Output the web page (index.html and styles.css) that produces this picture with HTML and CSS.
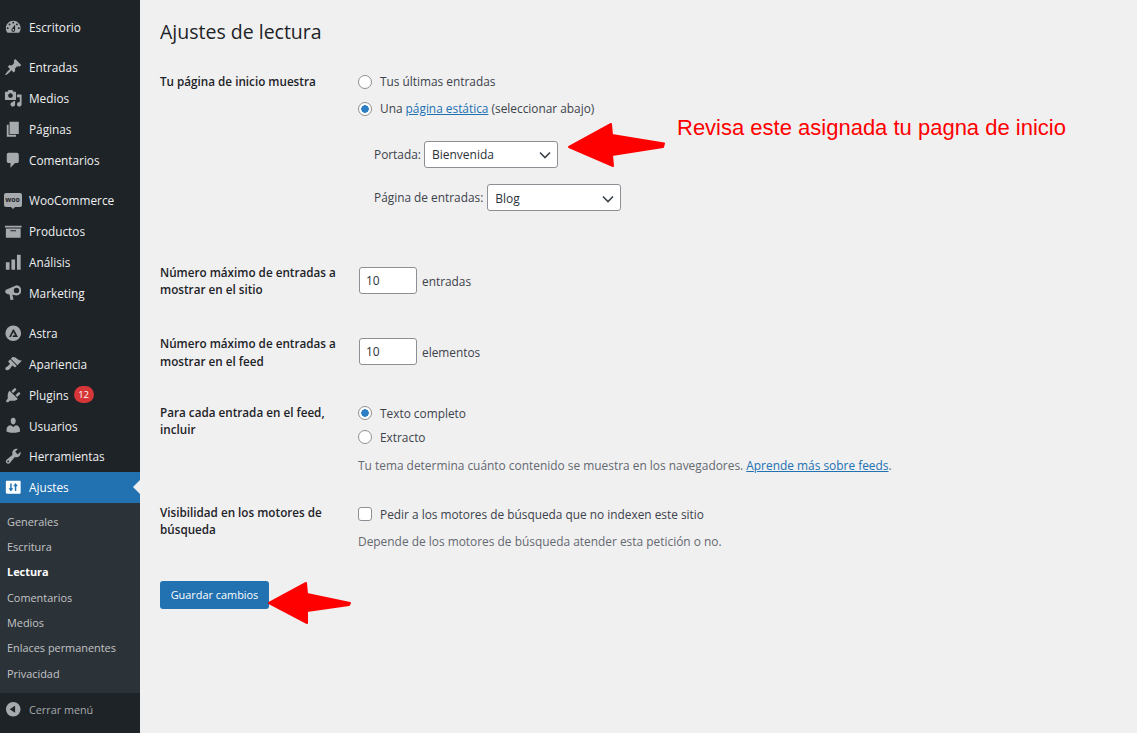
FILE: index.html
```html
<!DOCTYPE html>
<html lang="es">
<head>
<meta charset="utf-8">
<title>Ajustes de lectura</title>
<link rel="stylesheet" href="styles.css">
</head>
<body>
<div class="app">
  <nav class="side">
    <ul class="menu first">
      <li><svg class="ico" viewBox="0 0 20 20"><path d="M3.76 16h12.48c1.1-1.37 1.76-3.11 1.76-5 0-4.42-3.58-8-8-8s-8 3.58-8 8c0 1.89.66 3.63 1.76 5zM10 4c.55 0 1 .45 1 1s-.45 1-1 1-1-.45-1-1 .45-1 1-1zM6 6c.55 0 1 .45 1 1s-.45 1-1 1-1-.45-1-1 .45-1 1-1zm8 0c.55 0 1 .45 1 1s-.45 1-1 1-1-.45-1-1 .45-1 1-1zm-5.37 5.55L12 7v6c0 1.1-.9 2-2 2s-2-.9-2-2c0-.57.24-1.08.63-1.45zM4 10c.55 0 1 .45 1 1s-.45 1-1 1-1-.45-1-1 .45-1 1-1zm12 0c.55 0 1 .45 1 1s-.45 1-1 1-1-.45-1-1 .45-1 1-1zm-5 3c0-.55-.45-1-1-1s-1 .45-1 1 .45 1 1 1 1-.45 1-1z"/></svg>Escritorio</li>
    </ul>
    <ul class="menu">
      <li><svg class="ico" viewBox="0 0 20 20"><path d="M10.44 3.02l1.82-1.82 6.36 6.35-1.83 1.82c-1.05-.68-2.48-.57-3.41.36l-.75.75c-.92.93-1.04 2.35-.35 3.41l-1.83 1.82-2.41-2.41-2.8 2.79c-.42.42-3.38 2.71-3.8 2.29s1.86-3.39 2.28-3.81l2.79-2.79L4.1 9.36l1.83-1.82c1.05.69 2.48.57 3.4-.36l.75-.75c.93-.92 1.05-2.35.36-3.41z"/></svg>Entradas</li>
      <li><svg class="ico" viewBox="0 0 20 20"><path d="M13 11V4c0-.55-.45-1-1-1h-1.67L9 1H5L3.67 3H2c-.55 0-1 .45-1 1v7c0 .55.45 1 1 1h10c.55 0 1-.45 1-1zM7 4.5c1.38 0 2.5 1.12 2.5 2.5S8.38 9.5 7 9.5 4.5 8.38 4.5 7 5.62 4.5 7 4.5zM14 6h5v10.5c0 1.38-1.12 2.5-2.5 2.5S14 17.88 14 16.5s1.12-2.5 2.5-2.5c.17 0 .34.02.5.05V9h-3V6zm-4 8.05V13h2v3.5c0 1.38-1.12 2.5-2.5 2.5S7 17.88 7 16.5 8.12 14 9.5 14c.17 0 .34.02.5.05z"/></svg>Medios</li>
      <li><svg class="ico" viewBox="0 0 20 20"><path d="M6 15V2h10v13H6zm-1 1h8v2H3V5h2v11z"/></svg>Páginas</li>
      <li><svg class="ico" viewBox="0 0 20 20"><path d="M5 2h9c1.1 0 2 .9 2 2v7c0 1.1-.9 2-2 2h-2l-5 5v-5H5c-1.1 0-2-.9-2-2V4c0-1.1.9-2 2-2z"/></svg>Comentarios</li>
    </ul>
    <ul class="menu">
      <li><span class="woo">woo</span>WooCommerce</li>
      <li><svg class="ico" viewBox="0 0 20 20"><path d="M19 4v2H1V4h18zM2 7h16v10H2V7zm11 3V9H7v1h6z"/></svg>Productos</li>
      <li><svg class="ico" viewBox="0 0 20 20"><path d="M18 18V2h-4v16h4zm-6 0V7H8v11h4zm-6 0v-8H2v8h4z"/></svg>Análisis</li>
      <li><svg class="ico" viewBox="0 0 20 20"><path fill-rule="evenodd" d="M13.500 2.500a5.500 5.500 0 0 1 5 5.500 5.500 5.500 0 0 1-5 5.500L9 12.600l1.200 4.600c.1.500-.1.8-.6.9l-1.800.4c-.5.100-.8-.1-.9-.6L6 12.300l-2.500-.5C2.200 11.500 1.300 10.500 1.300 9.300s.9-2.200 2.200-2.500L13.500 2.500zm0 2.600a2.900 2.900 0 1 0 0 5.800 2.900 2.900 0 0 0 0-5.800z"/></svg>Marketing</li>
    </ul>
    <ul class="menu">
      <li><svg class="ico" viewBox="0 0 20 20"><path fill-rule="evenodd" d="M10 1.500a8.500 8.500 0 1 1 0 17 8.500 8.500 0 0 1 0-17zM9.600 6L5.500 14h2l2.600-5.200L12 12.200h-2l-.9 1.800h6L10.800 6z"/></svg>Astra</li>
      <li><svg class="ico" viewBox="0 0 20 20"><path d="M14.48 11.06L7.41 3.99l1.5-1.5c.5-.56 2.3-.47 3.51.32 1.21.8 1.43 1.28 2.91 2.1 1.18.64 2.45 1.26 4.45.85zm-.71.71L6.7 4.7 4.93 6.47c-.39.39-.39 1.02 0 1.41l1.06 1.06c.39.39.39 1.03 0 1.42-.6.6-1.43 1.11-2.21 1.69-.35.26-.7.53-1.01.84C1.43 13.23 1 14.99 1.99 16s2.75.58 4.09-.76c.31-.31.58-.66.84-1.01.58-.78 1.09-1.61 1.69-2.21.39-.39 1.02-.39 1.41 0l1.06 1.06c.39.39 1.02.39 1.41 0z"/></svg>Apariencia</li>
      <li><svg class="ico" viewBox="0 0 20 20"><path d="M13.11 4.36L9.87 7.6 8 5.73l3.24-3.24c.35-.34 1.05-.2 1.56.32.52.51.66 1.21.31 1.55zm-8 1.77l.91-1.12 9.01 9.01-1.19.84c-.71.71-2.63 1.16-3.82 1.16H6.14L4.9 17.26c-.59.59-1.54.59-2.12 0-.59-.58-.59-1.53 0-2.12l1.24-1.24v-3.88c0-1.13.4-3.19 1.09-3.89zm7.26 3.97l3.24-3.24c.34-.35 1.04-.21 1.55.31.52.51.66 1.21.32 1.55l-3.25 3.25z"/></svg>Plugins<span class="badge">12</span></li>
      <li><svg class="ico" viewBox="0 0 20 20"><path d="M10 9.25c-2.27 0-2.73-3.44-2.73-3.44C7 4.02 7.82 2 9.97 2c2.16 0 2.98 2.02 2.71 3.81 0 0-.41 3.44-2.68 3.44zm0 2.57L12.72 10c2.39 0 4.52 2.33 4.52 4.53v2.49s-3.65 1.13-7.24 1.13c-3.65 0-7.24-1.13-7.24-1.13v-2.49c0-2.25 1.94-4.48 4.47-4.48z"/></svg>Usuarios</li>
      <li><svg class="ico" viewBox="0 0 20 20"><path d="M16.68 9.77c-1.34 1.34-3.3 1.67-4.95.99l-5.41 6.52c-.99.99-2.59.99-3.58 0s-.99-2.59 0-3.57l6.52-5.42c-.68-1.65-.35-3.61.99-4.95 1.28-1.28 3.12-1.62 4.72-1.06l-2.89 2.89 2.82 2.82 2.86-2.87c.53 1.58.18 3.39-1.08 4.65zM3.81 16.21c.4.39 1.04.39 1.43 0 .4-.4.4-1.04 0-1.43-.39-.4-1.03-.4-1.43 0-.39.39-.39 1.03 0 1.43z"/></svg>Herramientas</li>
      <li class="current"><svg class="ico" viewBox="0 0 20 20"><path fill-rule="evenodd" d="M18 16V4c0-.55-.45-1-1-1H3c-.55 0-1 .45-1 1v12c0 .55.45 1 1 1h14c.55 0 1-.45 1-1zM6.700 6h1.600v5H10l-2.500 3.500L5 11h1.700V6zm5.800-.5L15 9h-1.700v5h-1.600V9H10l2.500-3.500z"/></svg>Ajustes</li>
    </ul>
    <ul class="sub">
      <li>Generales</li>
      <li>Escritura</li>
      <li class="on">Lectura</li>
      <li>Comentarios</li>
      <li>Medios</li>
      <li>Enlaces permanentes</li>
      <li>Privacidad</li>
    </ul>
    <div class="collapse"><svg class="ico" viewBox="0 0 20 20"><path d="M10 2.16c4.33 0 7.84 3.51 7.84 7.84s-3.51 7.84-7.84 7.84S2.16 14.33 2.16 10 5.71 2.16 10 2.16zm2 11.72V6.12L6.18 9.97z"/></svg>Cerrar menú</div>
  </nav>
  <main class="main">
    <h1 class="title">Ajustes de lectura</h1>
    <form class="form">
      <div class="row">
        <div class="label">Tu página de inicio muestra</div>
        <div class="field field-top">
          <div class="opt"><span class="radio"></span>Tus últimas entradas</div>
          <div class="opt gap9"><span class="radio checked"></span><span>Una <a class="link">página estática</a> (seleccionar abajo)</span></div>
          <div class="pick pick-a"><span>Portada:</span><div class="select">Bienvenida<svg class="chev" viewBox="0 0 12 8"><path d="M1 1.500l5 5 5-5"/></svg></div></div>
          <div class="pick pick-b"><span>Página de entradas:</span><div class="select">Blog<svg class="chev" viewBox="0 0 12 8"><path d="M1 1.500l5 5 5-5"/></svg></div></div>
        </div>
      </div>
      <div class="row row-num1">
        <div class="label">Número máximo de entradas a mostrar en el sitio</div>
        <div class="field num"><div class="input">10</div><span>entradas</span></div>
      </div>
      <div class="row row-num2">
        <div class="label">Número máximo de entradas a mostrar en el feed</div>
        <div class="field num"><div class="input">10</div><span>elementos</span></div>
      </div>
      <div class="row row-feed">
        <div class="label">Para cada entrada en el feed, incluir</div>
        <div class="field">
          <div class="opt"><span class="radio checked"></span>Texto completo</div>
          <div class="opt gap6"><span class="radio"></span>Extracto</div>
          <p class="note">Tu tema determina cuánto contenido se muestra en los navegadores. <a class="link">Aprende más sobre feeds</a>.</p>
        </div>
      </div>
      <div class="row row-vis">
        <div class="label">Visibilidad en los motores de búsqueda</div>
        <div class="field">
          <div class="opt shift"><span class="check"></span>Pedir a los motores de búsqueda que no indexen este sitio</div>
          <p class="note note-vis">Depende de los motores de búsqueda atender esta petición o no.</p>
        </div>
      </div>
      <div class="button">Guardar cambios</div>
    </form>
  </main>
</div>
<div class="callout">Revisa este asignada tu pagna de inicio</div>
<svg class="arrow arrow-a" viewBox="0 0 100 48"><path d="M2 26L44 3l1 11 52 8.500-1 3.500-51 8 1 11z"/></svg>
<svg class="arrow arrow-b" viewBox="0 0 86 44"><path d="M2 22L39 2l1 11 43 9-1 2-42 6 0 12z"/></svg>
</body>
</html>
```
FILE: styles.css
```css
* { box-sizing: border-box; }
html, body { margin: 0; padding: 0; height: 100%; }
body { background: #f0f0f1; color: #3c434a; font-family: "Open Sans", "Noto Sans", sans-serif; font-size: 11.870px; line-height: 18px; overflow: hidden; }
ul { list-style: none; margin: 0; padding: 0; }
.app { display: flex; height: 733px; }
.side { width: 140px; flex: none; background: #1d2327; color: #f0f0f1; display: flex; flex-direction: column; padding-top: 11.600px; }
.menu { margin-bottom: 9.700px; }
.menu li { height: 30.800px; display: flex; align-items: center; font-size: 11.800px; padding-left: 3.500px; white-space: nowrap; }
.ico { width: 18.500px; height: 18.500px; flex: none; margin-right: 7px; fill: #a7aaad; }
.woo { position: relative; width: 18px; height: 14px; flex: none; margin-right: 7.500px; border-radius: 2px; background: #a7aaad; color: #1d2327; font-size: 7px; line-height: 14px; font-weight: 700; text-align: center; }
.woo::after { content: ""; position: absolute; left: 7px; top: 14px; border: 2px solid transparent; border-top-color: #a7aaad; border-bottom-width: 0; }
.badge { margin-left: 5px; min-width: 20px; height: 17px; border-radius: 9px; background: #d63638; color: #fff; font-size: 9.500px; line-height: 17px; text-align: center; }
.current { background: #2271b1; color: #fff; position: relative; }
.current .ico { fill: #fff; }
.current::after { content: ""; position: absolute; right: 0; top: 8px; border: 7.500px solid transparent; border-right-color: #f0f0f1; border-left-width: 0; }
.menu:nth-of-type(4) { margin-bottom: 0; }
.sub { background: #2c3338; padding: 6.400px 0 6.600px; }
.sub li { height: 25.350px; display: flex; align-items: center; padding-left: 7px; font-size: 10.900px; color: #c3c4c7; }
.sub .on { color: #fff; font-weight: 700; }
.collapse { display: flex; align-items: center; height: 33px; padding-left: 3.500px; color: #a7aaad; font-size: 10.800px; }
.main { flex: 1; min-width: 0; padding: 19px 0 0 20px; }
.title { margin: 0; font-size: 19.500px; line-height: 26px; font-weight: 400; color: #1d2327; }
.form { margin-top: 28px; }
.row { display: grid; grid-template-columns: 198px 1fr; }
.label { color: #1d2327; font-weight: 600; width: 180px; font-size: 11.700px; line-height: 17.500px; }
.row-num1 { margin-top: 52.500px; }
.row-num2 { margin-top: 36.500px; }
.row-feed { margin-top: 33.500px; }
.row-vis { margin-top: 30px; }
.opt { display: flex; align-items: center; gap: 8px; }
.gap9 { margin-top: 9px; }
.gap6 { margin-top: 6px; }
.shift { margin-top: 1px; }
.field-top { margin-top: -1px; }
.field-top .radio { margin-top: 2px; }
.radio { width: 14px; height: 14px; border-radius: 50%; border: 1px solid #8c8f94; background: #fff; flex: none; }
.radio.checked { background: radial-gradient(circle, #2c7fc4 0 3.500px, #fff 4px); }
.check { width: 14px; height: 14px; border-radius: 3px; border: 1px solid #8c8f94; background: #fff; flex: none; }
.link { color: #2271b1; text-decoration: underline; }
.pick { display: flex; align-items: center; gap: 4px; margin-left: 16px; }
.pick > span { margin-top: -2px; }
.pick-a { margin-top: 24px; gap: 3px; }
.pick-b { margin-top: 16px; }
.pick-b .select { padding-top: 3px; }
.select { width: 134px; height: 27px; border: 1px solid #8c8f94; border-radius: 3px; background: #fff; color: #2c3338; display: flex; align-items: center; justify-content: space-between; padding: 1px 6px 0 7px; font-size: 12px; }
.chev { width: 12px; height: 8px; fill: none; stroke: #3c434a; stroke-width: 1.600px; }
.num { display: flex; align-items: flex-start; gap: 5px; line-height: 29px; padding-top: 3px; margin-left: 1px; }
.input { width: 58px; height: 27px; border: 1px solid #8c8f94; border-radius: 3px; background: #fff; color: #2c3338; padding-left: 6px; font-size: 12px; line-height: 26px; }
.note { margin: 10px 0 0; color: #646970; font-size: 11.920px; }
.note-vis { margin-top: 9px; }
.button { margin-top: 31px; width: 109px; height: 28px; background: #2271b1; color: #fff; border-radius: 3px; font-size: 10.900px; line-height: 27px; text-align: center; }
.callout { position: absolute; left: 677px; top: 115px; font-family: "Liberation Sans", Arial, sans-serif; font-size: 22px; line-height: 26px; color: #f00; white-space: nowrap; }
.arrow { position: absolute; fill: #f00; stroke: #f00; stroke-width: 2px; stroke-linejoin: round; }
.arrow-a { left: 567px; top: 121px; width: 100px; height: 48px; }
.arrow-b { left: 267px; top: 581px; width: 86px; height: 44px; }
```
